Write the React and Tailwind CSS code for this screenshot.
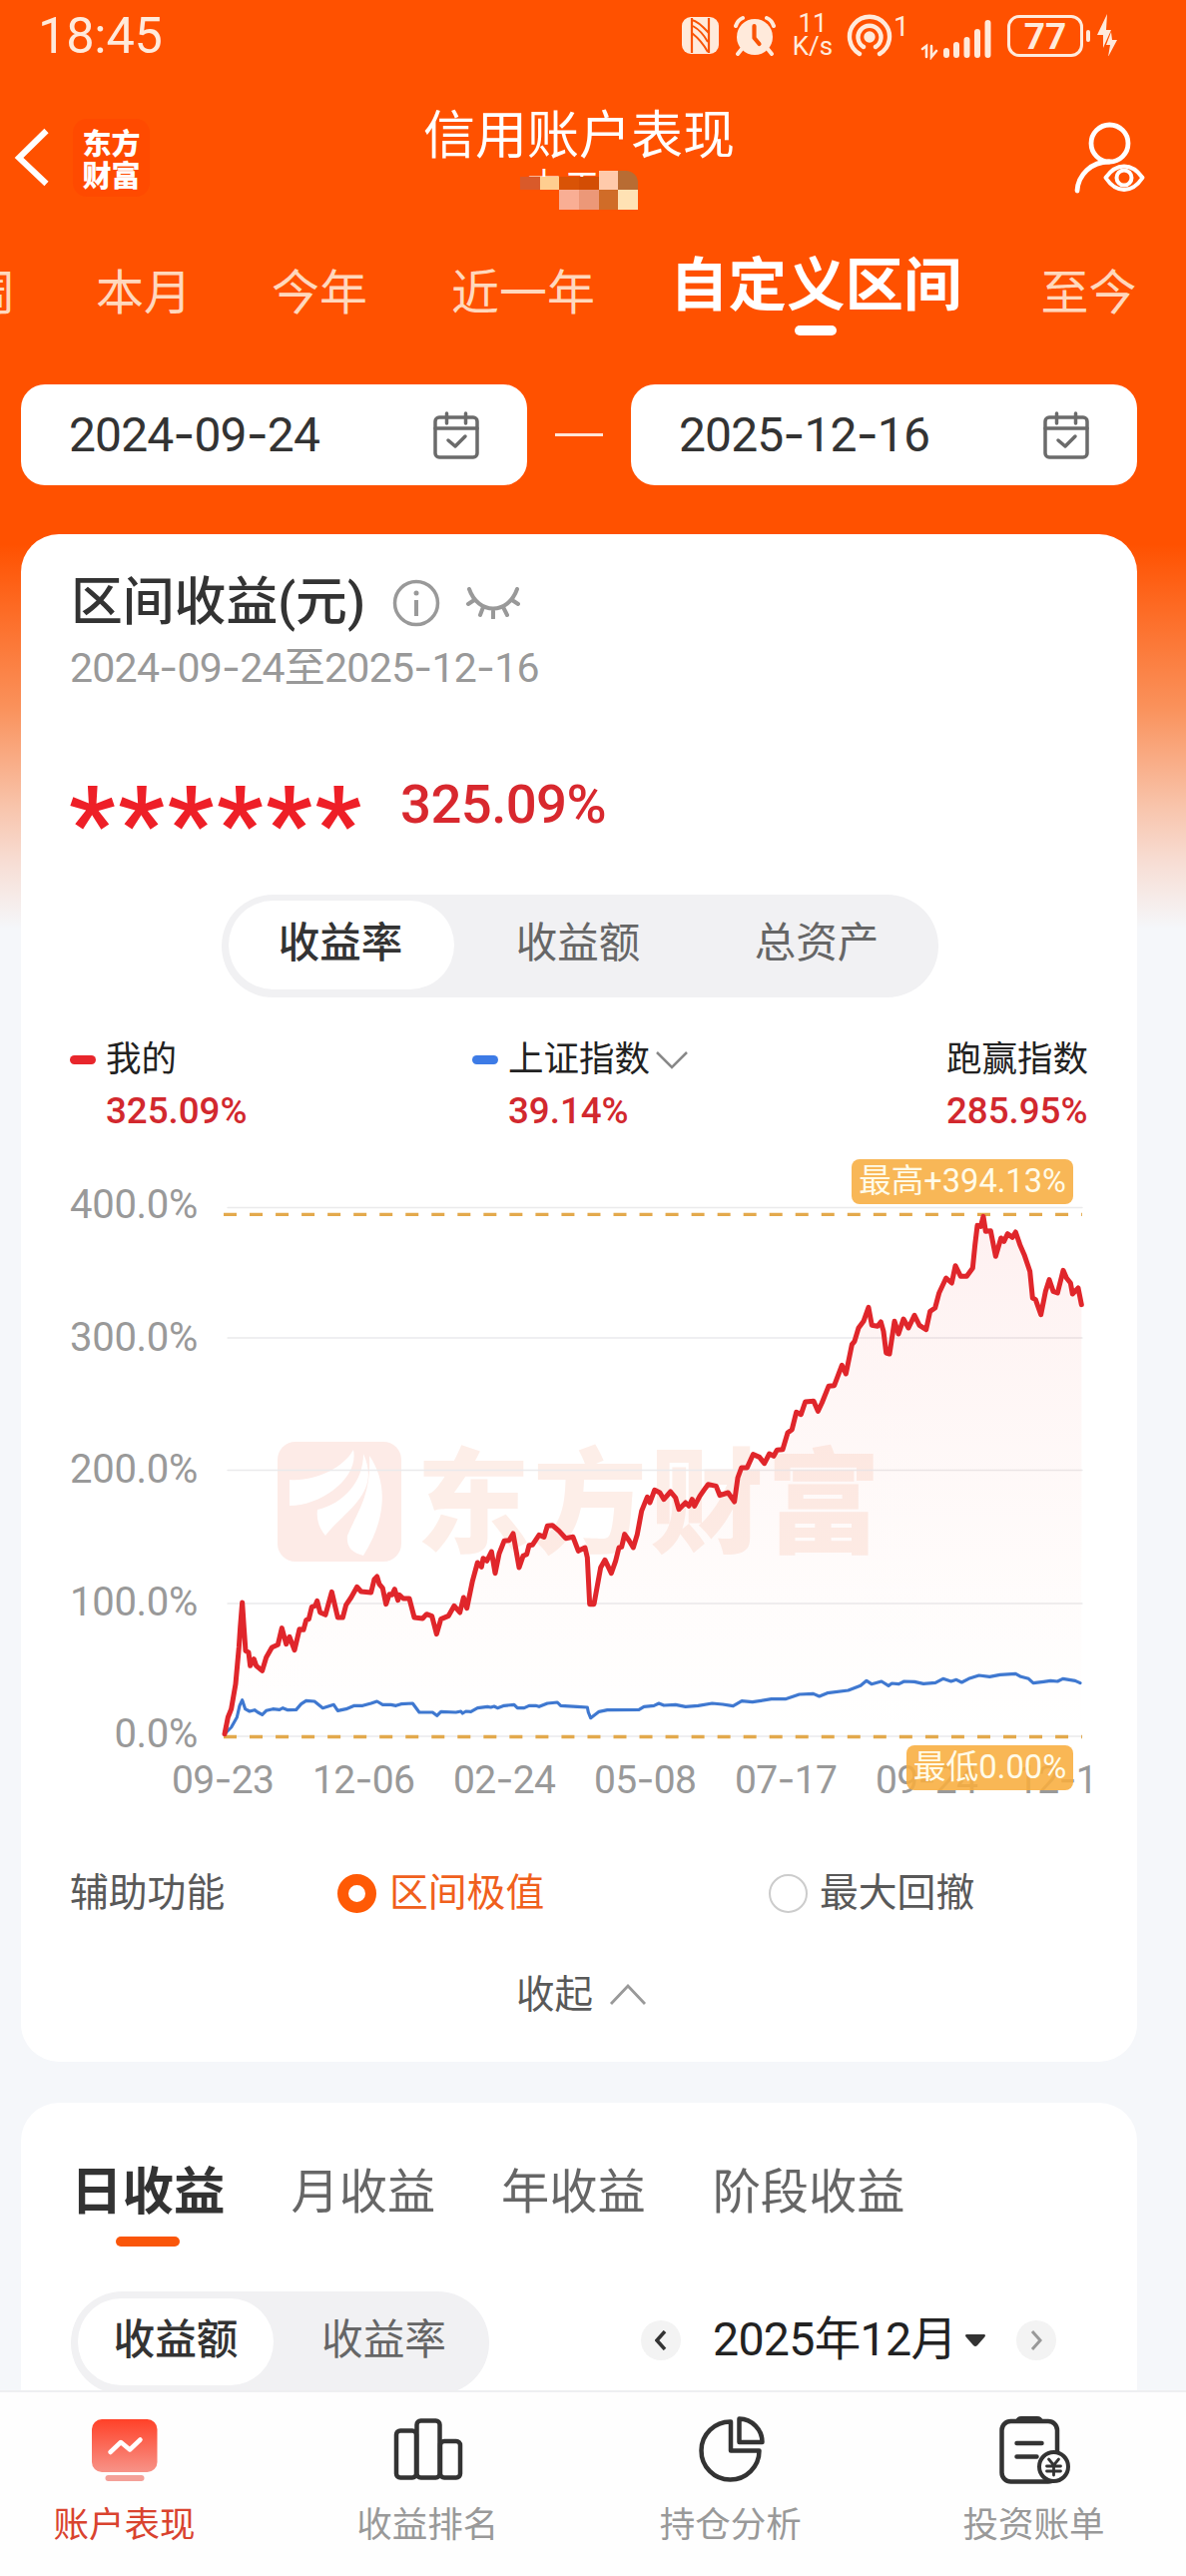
import React from 'react';

/* Chart space: 3 units per pixel, x from 0 to 2700, y from 0 to 2040. */
const mineEarly = [
  [75,1010],[85,960],[95,935],[108,860],[118,750],[122,690],[128,615],[133,690],[138,760],[147,765],[152,805],[163,785],[170,805],[188,820],[200,780],[217,750],[235,742],[247,692],[260,740],[270,718],[285,758],[300,695],[312,697],[320,668],[328,665],[337,628],[347,625],[353,610],[362,645],[378,652],[397,583],[415,660],[430,660],[440,622],[455,600],[473,568],[485,582],[515,585],[525,545],[533,537],[540,560],[550,572],[560,620],[570,590],[578,592],[586,575],[596,608],[600,592],[612,603],[630,603],[645,660],[670,663],[682,650],[698,656],[712,710],[725,665],[748,655],[765,625],[782,645],[793,600],[803,632],[820,550],[835,495],[847,508],[852,482],[863,490],[877,462],[888,527],[900,468],[915,430],[930,428],[942,408],[960,510],[972,475],[983,470],[990,443],[1000,442],[1020,412],[1035,418],[1045,385],[1060,383],[1080,400],[1100,422],[1122,418],[1138,460],[1158,450],[1165,480],[1172,620],[1185,620],[1205,510],[1218,487],[1237,527],[1250,490],[1260,450],[1268,448],[1277,410],[1290,428],[1303,450],[1315,410],[1328,340],[1345,298],[1353,315],[1367,277],[1383,285],[1395,305],[1415,282],[1430,300],[1440,335],[1460,315],[1470,325],[1480,305],[1487,325],
].map(([x, y]) => [x, y + 810]);
const mineLate = [
  [183,1105],[197,1085],[208,1070],[232,1075],[243,1103],[268,1095],[287,1122],[297,1050],[308,1020],[325,1020],[343,980],[362,988],[377,1007],[392,978],[405,985],[415,967],[432,965],[447,915],[460,905],[473,853],[487,860],[500,822],[525,820],[538,850],[550,825],[570,775],[587,773],[610,712],[622,738],[640,650],[648,640],[660,600],[675,580],[690,538],[700,592],[717,595],[727,582],[735,610],[743,675],[753,678],[768,580],[780,618],[795,573],[810,600],[828,562],[843,592],[863,605],[875,550],[890,540],[902,495],[923,450],[940,465],[951,413],[967,445],[985,445],[1003,420],[1010,350],[1017,292],[1027,295],[1035,265],[1042,310],[1057,308],[1072,385],[1088,330],[1097,340],[1108,317],[1122,328],[1132,312],[1145,350],[1158,380],[1175,430],[1183,510],[1192,515],[1208,560],[1222,490],[1233,455],[1245,490],[1258,495],[1275,427],[1285,450],[1297,465],[1303,498],[1320,480],[1330,530],
].map(([x, y]) => [x + 1320, y]);
const mine = [...mineEarly, ...mineLate].map((p) => p.join(',')).join(' ');
const indexEarly = [
  [75,1010],[95,990],[112,960],[120,925],[128,908],[137,935],[150,942],[165,938],[175,945],[188,952],[200,940],[220,935],[240,937],[250,932],[265,938],[290,937],[305,920],[320,910],[345,912],[370,932],[403,922],[415,940],[440,935],[465,925],[490,925],[515,918],[533,912],[550,922],[575,922],[590,925],[605,920],[640,918],[660,945],[700,945],[713,955],[725,943],[770,945],[785,942],[790,948],[800,942],[815,943],[835,932],[865,928],[875,930],[885,927],[895,932],[915,925],[945,922],[955,932],[975,932],[990,925],[1010,925],[1020,928],[1045,918],[1075,915],[1085,925],[1135,928],[1165,930],[1168,945],[1175,962],[1200,943],[1225,938],[1320,937],[1335,928],[1365,925],[1380,918],[1395,924],[1430,922],[1460,928],
].map(([x, y]) => [x, y + 810]);
const indexLate = [
  [1498,1735],[1540,1728],[1572,1731],[1603,1736],[1629,1721],[1661,1724],[1718,1715],[1760,1715],[1802,1701],[1844,1699],[1862,1707],[1886,1697],[1949,1689],[1986,1675],[2004,1660],[2019,1670],[2049,1662],[2070,1675],[2080,1668],[2101,1670],[2117,1662],[2148,1663],[2175,1669],[2211,1666],[2234,1654],[2258,1662],[2274,1657],[2290,1665],[2311,1654],[2342,1644],[2374,1648],[2405,1642],[2452,1639],[2468,1648],[2491,1654],[2505,1667],[2536,1663],[2557,1660],[2578,1662],[2594,1654],[2631,1660],[2646,1667],
];
const index = [...indexEarly, ...indexLate].map((p) => p.join(',')).join(' ');

/* Text whose hyphens take the width of a digit. */
function Dashed({ children }) {
  return children.split('-').map((part, i) => (
    <React.Fragment key={i}>
      {i > 0 && <span className="font-['Inter']">-</span>}
      {part}
    </React.Fragment>
  ));
}

function StatusBar() {
  return (
    <div className="flex h-[72px] shrink-0 items-start pl-[38px] pt-[4px] text-[#ffeadb]">
      <div className="mt-[2px] w-[645px] text-[50.500px] leading-[60px] tracking-[-0.200px]">18:45</div>
      <svg className="mt-[13px] h-[37px] w-[37px]" viewBox="0 0 37 37">
        <rect width="37" height="37" rx="9" fill="currentColor" />
        <path d="M10 1v35M27 1v35" stroke="#f95406" strokeWidth="2.200" />
        <path d="M10 3Q16 4 27 16M10 16Q20 24 26 35M11 9Q20 14 26 25" stroke="#f95406" strokeWidth="2" fill="none" />
      </svg>
      <svg className="ml-[14px] mt-[11px] h-[42px] w-[44px]" viewBox="0 0 44 42">
        <circle cx="22" cy="22" r="18" fill="currentColor" />
        <path d="M3 11Q5 5 10 3M41 11Q39 5 34 3M9 34l-4 5M35 34l4 5" stroke="currentColor" strokeWidth="4" strokeLinecap="round" />
        <path d="M21.500 11v12l5 6" stroke="#f95406" strokeWidth="4.200" fill="none" strokeLinecap="round" strokeLinejoin="round" />
      </svg>
      <div className="ml-[12px] mt-[8px] flex w-[48px] flex-col items-center text-[26px] leading-[23px]">
        <span>11</span>
        <span>K/s</span>
      </div>
      <svg className="ml-[10px] mt-[10px] h-[44px] w-[46px]" viewBox="0 0 46 44" fill="none" stroke="currentColor" strokeWidth="4.4" strokeLinecap="round">
        <circle cx="23" cy="23" r="3.500" fill="currentColor" />
        <path d="M13 40A20 20 0 1 1 33 40M17 33A11.5 11.5 0 1 1 29 33" />
      </svg>
      <div className="mt-[8px] w-[17px] pl-[1px] text-[28px] leading-[30px]">1</div>
      <svg className="ml-[11px] mt-[12px] h-[44px] w-[74px]" viewBox="0 0 74 44" fill="none" stroke="currentColor" strokeWidth="6" strokeLinecap="round">
        <path d="M26 35v4M36 29v10M46.500 24v15M57 16v23M67.500 7v32" />
        <path d="M2 33l4-3v11M11 30v11l5-6" strokeWidth="2.6" />
      </svg>
      <div className="ml-[13px] mt-[11px] flex h-[42px] w-[76px] items-center justify-center rounded-[12px] border-[3px] border-current text-[37px] font-bold leading-none">
        77
      </div>
      <div className="ml-[3px] mt-[26px] h-[12px] w-[4px] rounded-full bg-current" />
      <svg className="ml-[7px] mt-[10px] h-[42px] w-[20px]" viewBox="0 0 20 42" fill="currentColor">
        <path d="M10 0 0 21h6L6 34 14 16H9zM14 18l-5 13h4l-2 12 9-17h-5z" />
      </svg>
    </div>
  );
}

function Header() {
  return (
    <header className="flex h-[158px] shrink-0 items-start text-white">
      <svg className="ml-[14px] mt-[55px] h-[60px] w-[38px]" viewBox="0 0 38 60" fill="none" stroke="currentColor" strokeWidth="6">
        <path d="M32.500 4 5 31l27.500 26" />
      </svg>
      <div className="ml-[21px] mt-[47px] flex h-[78px] w-[77px] flex-col items-center justify-center rounded-[14px] bg-[#ff4a00] font-['Noto_Sans_CJK_SC'] text-[29px] font-black leading-[32px]">
        <span>东方</span>
        <span>财富</span>
      </div>
      <div className="ml-[275px] flex w-[310px] flex-col items-center">
        <h1 className="mt-[35px] whitespace-nowrap text-[52px] leading-[60px]">信用账户表现</h1>
        <div className="mt-[2px] flex h-[10px] w-[118px] items-start overflow-hidden pl-[7px] text-[34px] leading-[35px] tracking-[4px]">
          本工
        </div>
        <div className="-mt-[8px] grid w-[118px] grid-cols-6">
          <i className="mt-[6px] h-[13px] bg-[#d95a2a]" />
          <i className="mt-[6px] h-[13px] bg-[#ffce90]" />
          <i className="mt-[6px] h-[13px] bg-[#d95306]" />
          <i className="mt-[6px] h-[13px] bg-[#d34d04]" />
          <i className="h-[19px] bg-[#ffcaab]" />
          <i className="h-[19px] rounded-tr-[12px] bg-[#b86c33]" />
          <i className="h-[20px]" />
          <i className="h-[20px]" />
          <i className="h-[20px] bg-[#f9ae94]" />
          <i className="h-[20px] bg-[#ec9878]" />
          <i className="h-[20px] bg-[#d06c28]" />
          <i className="h-[20px] bg-[#ffe2b4]" />
        </div>
      </div>
      <svg className="ml-[341px] mt-[49px] h-[76px] w-[72px]" viewBox="1075 120 72 76" fill="none" stroke="currentColor" strokeWidth="4.800" strokeLinecap="round">
        <ellipse cx="1110.500" cy="142.500" rx="18.500" ry="18.500" />
        <path d="M1110 161c-18 0-31 13-32 29" />
        <path d="M1106.500 177q8-11.500 18.500-11.500t18.500 11.500q-8 12-18.500 12t-18.500-12z" strokeWidth="4" strokeLinejoin="round" />
        <circle cx="1125" cy="177" r="7.500" strokeWidth="4" />
      </svg>
    </header>
  );
}

function RangeTabs() {
  return (
    <nav className="flex h-[155px] shrink-0 items-start whitespace-nowrap pt-[34px] text-[48px] leading-[60px] text-[#ffd8bd]">
      <span className="-ml-[32px]">周</span>
      <span className="ml-[80px]">本月</span>
      <span className="ml-[80px]">今年</span>
      <span className="ml-[84px]">近一年</span>
      <span className="-mt-[8px] ml-[75px] flex flex-col items-center text-[58.500px] font-bold text-white">
        自定义区间
        <i className="mt-[10px] h-[10px] w-[42px] rounded-full bg-white" />
      </span>
      <span className="ml-[79px]">至今</span>
    </nav>
  );
}

function DateBox({ children }) {
  return (
    <div className="flex h-[101px] w-[507px] items-center rounded-[24px] bg-white pl-[48px] pr-[48px]">
      <span className="flex-1 text-[48px] leading-none tracking-[-0.900px] text-[#333]">
        <Dashed>{children}</Dashed>
      </span>
      <svg className="h-[50px] w-[46px]" viewBox="0 0 46 50" fill="none" stroke="#6b6b6b" strokeWidth="3.500" strokeLinecap="round" strokeLinejoin="round">
        <rect x="2" y="7" width="42" height="40" rx="4" />
        <path d="M2 18h42M13.500 3v10M32.500 3v10M15 30l7 6 10-10" />
      </svg>
    </div>
  );
}

function Legend({ dash, name, value, arrow }) {
  return (
    <div className="flex">
      {dash && <i className={`mr-[10px] mt-[17px] h-[9px] w-[26px] rounded-full ${dash}`} />}
      <div>
        <div className="flex h-[44px] items-center text-[35.500px] leading-none text-[#222]">
          {name}
          {arrow && (
            <svg className="ml-[5px] h-[20px] w-[34px]" viewBox="0 0 34 20" fill="none" stroke="#888" strokeWidth="2.500">
              <path d="M2 2l15 15L32 2" />
            </svg>
          )}
        </div>
        <div className="mb-[2px] mt-[7px] text-[36.700px] font-medium leading-[44px] text-[#d2282e]">{value}</div>
      </div>
    </div>
  );
}

function Chart() {
  const grid = [238.5, 630, 1027.5, 1428, 1827];
  return (
    <div className="relative h-[680px] w-[1118px] shrink-0">
      <div className="flex w-[177px] flex-col items-end pt-[53px] text-[40px] leading-[48px] tracking-[-0.300px] text-[#999]">
        {['400.0%', '300.0%', '200.0%', '100.0%', '0.0%'].map((t) => (
          <span key={t} className="mb-[84.500px]">{t}</span>
        ))}
      </div>
      <div className="absolute left-[257px] top-[314px] flex items-center">
        <svg className="h-[120px] w-[124px]" viewBox="0 0 124 120">
          <rect width="124" height="120" rx="18" fill="#fdebe7" />
          <path d="M12 38C38 40 66 26 76 8c6 28-32 56-64 56zM40 68C66 62 86 40 86 12c18 40-18 56-38 82q-10-12-8-26zM92 14c18 26 18 62-6 100q-18-4-16-20c10-24 24-40 22-80z" fill="#fff" />
        </svg>
        <span className="-mt-[14px] ml-[15px] font-['Noto_Sans_CJK_SC'] text-[114px] font-black leading-[120px] tracking-[3px] text-[#fdeee8]">东方财富</span>
      </div>
      <svg className="absolute left-[179px] top-0 h-[680px] w-[900px]" viewBox="0 0 2700 2040" fill="none" strokeLinejoin="round" strokeLinecap="round">
        <defs>
          <linearGradient id="area" x1="0" y1="0" x2="0" y2="1">
            <stop offset="0" stopColor="#f02020" stopOpacity="0.065" />
            <stop offset="1" stopColor="#f86030" stopOpacity="0" />
          </linearGradient>
        </defs>
        {grid.map((y) => (
          <path key={y} d={`M84 ${y}H2652`} stroke="#eaeaec" strokeWidth="4" />
        ))}
        <polygon points={`${mine} 2650,1827 75,1827`} fill="url(#area)" />
        <path d="M72 259H2652M72 1828.500H2652" stroke="#e3a94c" strokeWidth="10" strokeLinecap="butt" strokeDasharray="39 39.100" />
        <polyline points={index} stroke="#3f78d0" strokeWidth="9.500" />
        <polyline points={mine} stroke="#e0262b" strokeWidth="15" />
      </svg>
      <div className="absolute left-[151px] top-[628px] flex w-[921px] overflow-hidden text-[39px] leading-[48px] tracking-[-0.700px] text-[#999]">
        {['09-23', '12-06', '02-24', '05-08', '07-17', '09-24', '12-16'].map((t) => (
          <span key={t} className="w-[141px] shrink-0">
            <Dashed>{t}</Dashed>
          </span>
        ))}
      </div>
      <div className="absolute left-[832px] top-[31px] flex h-[45px] w-[222px] items-center justify-center whitespace-nowrap rounded-[8px] bg-[#f8b757] text-[32.600px] leading-none text-[#fffbe8]">
        最高+394.13%
      </div>
      <div className="absolute left-[887px] top-[618px] flex h-[45px] w-[167px] items-center justify-center whitespace-nowrap rounded-[8px] bg-[#f8ad3ee0] text-[32.800px] leading-none text-[#fffbe8]">
        最低0.00%
      </div>
    </div>
  );
}

function PerformanceCard() {
  return (
    <section className="ml-[21px] mt-[49px] flex h-[1530px] w-[1118px] shrink-0 flex-col rounded-[38px] bg-white">
      <div className="mt-[39px] flex h-[60px] items-center pl-[50px]">
        <h2 className="w-[297px] whitespace-nowrap text-[51.800px] font-medium leading-[60px] text-[#333]">区间收益(元)</h2>
        <svg className="ml-[25px] h-[48px] w-[48px]" viewBox="0 0 48 48" fill="none" stroke="#999" strokeWidth="3.500">
          <circle cx="24" cy="24" r="21.500" />
          <path d="M24 21v16" strokeWidth="4" />
          <circle cx="24" cy="14" r="2.500" fill="#999" stroke="none" />
        </svg>
        <svg className="ml-[26px] h-[32px] w-[54px]" viewBox="0 0 54 32" fill="none" stroke="#999" strokeWidth="4" strokeLinecap="round">
          <path d="M3 2C12 28 42 28 51 2M8 13l-6 4M46 13l6 4M17 20l-3 8M27 23v8M37 20l4 8" />
        </svg>
      </div>
      <p className="mt-[10px] pl-[49px] text-[41px] leading-[48px] tracking-[-0.730px] text-[#999]">
        <Dashed>2024-09-24至2025-12-16</Dashed>
      </p>
      <div className="mt-[76px] flex h-[72px] items-center pl-[48px]">
        <span className="h-[72px] w-[332px] text-[102px] font-bold leading-[113px] tracking-[3px] text-[#ee1f27]">******</span>
        <span className="text-[54.500px] font-medium leading-[72px] tracking-[-0.600px] text-[#d8282e]">325.09%</span>
      </div>
      <div className="ml-[201px] mt-[55px] flex h-[103px] w-[718px] items-center rounded-full bg-[#f1f1f3] p-[7px] pb-[9px] text-[41.500px] leading-none text-[#666]">
        <span className="flex h-[89px] w-[226px] items-center justify-center rounded-full bg-white pb-[3px] pr-[2px] font-medium text-[#333]">收益率</span>
        <span className="flex w-[248px] justify-center pb-[3px]">收益额</span>
        <span className="flex flex-1 justify-center pb-[3px]">总资产</span>
      </div>
      <div className="mt-[41px] flex pl-[49px] pr-[49px]">
        <div className="w-[403px]"><Legend dash="bg-[#e8262c]" name="我的" value="325.09%" /></div>
        <div className="flex-1"><Legend dash="bg-[#3d7be6]" name="上证指数" value="39.14%" arrow /></div>
        <Legend name="跑赢指数" value="285.95%" />
      </div>
      <div className="-mt-[7px]"><Chart /></div>
      <div className="mt-[62px] flex h-[48px] items-center pl-[49px] text-[38.800px] leading-none text-[#595959]">
        <span className="w-[268px]">辅助功能</span>
        <i className="h-[39px] w-[39px] rounded-full border-[11px] border-[#ff5a05]" />
        <span className="ml-[13px] w-[380px] text-[#f0601c]">区间极值</span>
        <i className="h-[39px] w-[39px] rounded-full border-[2.500px] border-[#ccc]" />
        <span className="ml-[12px]">最大回撤</span>
      </div>
      <div className="mt-[54px] flex h-[48px] items-center pl-[496px] text-[38.500px] leading-none text-[#595959]">
        收起
        <svg className="ml-[16px] h-[22px] w-[38px]" viewBox="0 0 38 22" fill="none" stroke="#999" strokeWidth="2.800">
          <path d="M2 20 19 2l17 18" />
        </svg>
      </div>
    </section>
  );
}

function IncomeCard() {
  return (
    <section className="ml-[21px] mt-[41px] flex h-[288px] w-[1118px] shrink-0 flex-col overflow-hidden rounded-t-[38px] bg-white">
      <div className="flex pl-[50px] pt-[60px] text-[48.200px] leading-[60px] text-[#666]">
        <span className="flex flex-col items-center text-[51.500px] font-bold text-[#333]">
          日收益
          <i className="mt-[14px] h-[10px] w-[64px] rounded-[5px] bg-[#fa560a]" />
        </span>
        <span className="ml-[66px]">月收益</span>
        <span className="ml-[66px]">年收益</span>
        <span className="ml-[67px]">阶段收益</span>
      </div>
      <div className="mt-[45px] flex h-[103px] shrink-0 items-start pl-[50px]">
        <div className="flex h-[103px] w-[419px] items-center rounded-full bg-[#f1f1f3] p-[7px] pb-[9px] text-[41.700px] leading-none text-[#666]">
          <span className="flex h-[87px] w-[196px] items-center justify-center rounded-full bg-white pb-[3px] font-medium text-[#333]">收益额</span>
          <span className="flex flex-1 justify-center pb-[3px] pl-[12px]">收益率</span>
        </div>
        <div className="ml-[152px] flex h-[97px] items-center">
          <span className="flex h-[40px] w-[40px] items-center justify-center rounded-full bg-[#f3f3f3]">
            <svg className="h-[20px] w-[12px]" viewBox="0 0 12 20" fill="none" stroke="#333" strokeWidth="3.500"><path d="M10 1 2 10l8 9" /></svg>
          </span>
          <span className="ml-[32px] w-[252px] text-[46.500px] leading-none tracking-[-0.700px] text-[#222]">2025年12月</span>
          <svg className="h-[12px] w-[22px]" viewBox="0 0 22 12" fill="#333"><path d="M2 0h18q2 1 0 3l-7 8q-2 2-4 0L2 3Q0 1 2 0z" /></svg>
          <span className="ml-[30px] flex h-[40px] w-[40px] items-center justify-center rounded-full bg-[#f3f3f3]">
            <svg className="h-[20px] w-[12px]" viewBox="0 0 12 20" fill="none" stroke="#999" strokeWidth="3"><path d="M2 1l8 9-8 9" /></svg>
          </span>
        </div>
      </div>
    </section>
  );
}

function BottomNav() {
  const items = [
    ['账户表现', 'text-[#d9432f]', (
      <svg className="h-[72px] w-[72px]" viewBox="88 2418 72 72" fill="none">
        <defs>
          <linearGradient id="tile" x1="0" y1="0" x2="0" y2="1">
            <stop offset="0" stopColor="#ff4128" />
            <stop offset="1" stopColor="#f79388" />
          </linearGradient>
        </defs>
        <rect x="91" y="2423" width="65.500" height="53" rx="10" fill="url(#tile)" />
        <rect x="104.500" y="2479" width="39" height="6" rx="3" fill="#f4a098" />
        <path d="M109.500 2456l10.500-10 9 7.500 10.500-10" stroke="#fff" strokeWidth="4.500" strokeLinecap="round" strokeLinejoin="round" />
      </svg>
    )],
    ['收益排名', 'text-[#999]', (
      <svg className="h-[72px] w-[72px]" viewBox="391 2418 72 72" fill="none" stroke="#333" strokeWidth="4.500">
        <rect x="396" y="2434.500" width="20" height="47" rx="4" />
        <rect x="416.500" y="2424.500" width="23" height="57" rx="4" />
        <rect x="440" y="2445" width="20" height="36.500" rx="4" />
      </svg>
    )],
    ['持仓分析', 'text-[#999]', (
      <svg className="h-[72px] w-[72px]" viewBox="695 2418 72 72" fill="none" stroke="#333" strokeWidth="4.500" strokeLinejoin="round">
        <path d="M731 2425.500A29 29 0 1 0 759.500 2454.500H731z" />
        <path d="M739.500 2422.500V2446H762.500A23.500 23.500 0 0 0 739.500 2422.500z" />
      </svg>
    )],
    ['投资账单', 'text-[#999]', (
      <svg className="h-[72px] w-[76px]" viewBox="997 2418 76 72" fill="none" stroke="#333" strokeWidth="4.500" strokeLinecap="round" strokeLinejoin="round">
        <rect x="1003.500" y="2425" width="55.500" height="60.500" rx="9" />
        <path d="M1018 2425q1-4 5-4h16q4 0 5 4z" fill="#333" strokeWidth="2" />
        <path d="M1018.500 2447h25M1018.500 2460.500h20" />
        <circle cx="1055.500" cy="2470.500" r="14.500" fill="#fff" strokeWidth="4" />
        <path d="M1050.500 2463l5 6 5-6M1048.500 2470h14M1048.500 2475h14M1055.500 2469v10" strokeWidth="2.800" />
      </svg>
    )],
  ];
  return (
    <nav className="flex h-[186px] shrink-0 justify-between border-t-2 border-[#eeeff1] bg-[#fefefe] pl-[53px] pr-[81px] pt-[22px]">
      {items.map(([label, color, icon]) => (
        <div key={label} className={`flex w-[143px] flex-col items-center text-[35.500px] leading-[44px] ${color}`}>
          {icon}
          <span className="mt-[17px] whitespace-nowrap">{label}</span>
        </div>
      ))}
    </nav>
  );
}

export default function App() {
  return (
    <main className="flex h-[2580px] w-[1188px] flex-col overflow-hidden bg-[#f5f7fa] bg-[linear-gradient(to_bottom,#ff5100_0,#ff5100_545px,#fa925c_710px,#f8c5ad_810px,#f7ded5_865px,#f5f7fa_930px)] font-['Roboto','Noto_Sans_CJK_SC',sans-serif]">
      <StatusBar />
      <Header />
      <RangeTabs />
      <div className="flex shrink-0 items-center pl-[21px]">
        <DateBox>2024-09-24</DateBox>
        <i className="mx-[28px] h-[3px] w-[48px] bg-[#ffe6d8]" />
        <DateBox>2025-12-16</DateBox>
      </div>
      <PerformanceCard />
      <IncomeCard />
      <BottomNav />
    </main>
  );
}
